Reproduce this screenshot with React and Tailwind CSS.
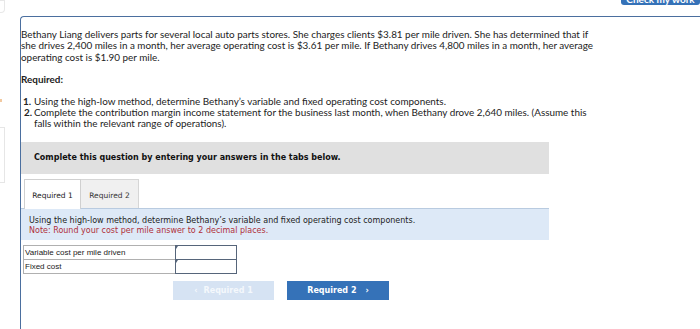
const body = { fontFamily: 'Lato, "Open Sans", sans-serif' }
const verdana = { fontFamily: '"DejaVu Sans", Verdana, sans-serif' }

const rows = ['Variable cost per mile driven', 'Fixed cost']

const App = () => {
    return (
        <div className="w-[700px] h-[329px] overflow-hidden bg-white flex text-[#222]" style={body}>
            <div className="w-[20px] shrink-0 flex flex-col">
                <div className="w-[5px] h-[13px] border border-[#e8e8e8] border-l-0 rounded-br-sm" />
                <div className="w-[2px] h-[3px] bg-[#f2c9a0] mt-[86px]" />
                <div className="w-[5px] h-[56px] border border-[#e6e6e6] border-l-0 mt-[25px]" />
            </div>

            <div className="flex-1 flex flex-col">
                <div className="h-[16px] flex justify-end">
                    <button className="w-[79px] h-[20px] mt-[-15px] pt-[8px] bg-[#3572b8] rounded-[3px] text-white text-[10px] leading-[12px] font-bold">
                        Check my work
                    </button>
                </div>

                <div className="flex-1 border-t border-l border-[#4b6f9f] rounded-tl-[4px] pt-[12px]">
                    <p className="text-[9.9px] leading-[11.4px] whitespace-nowrap">
                        Bethany Liang delivers parts for several local auto parts stores. She charges clients $3.81 per mile driven. She has determined that if<br />
                        she drives 2,400 miles in a month, her average operating cost is $3.61 per mile. If Bethany drives 4,800 miles in a month, her average<br />
                        operating cost is $1.90 per mile.
                    </p>

                    <p className="mt-[10.5px] text-[9.9px] leading-[11.4px] font-bold">Required:</p>

                    <div className="mt-[10.5px] text-[9.9px] leading-[11.4px] grid grid-cols-[13px_1fr] whitespace-nowrap">
                        <span className="font-bold text-right pr-[3px]">1.</span>
                        <span>Using the high-low method, determine Bethany’s variable and fixed operating cost components.</span>
                        <span className="font-bold text-right pr-[2px]">2.</span>
                        <span>
                            Complete the contribution margin income statement for the business last month, when Bethany drove 2,640 miles. (Assume this<br />
                            falls within the relevant range of operations).
                        </span>
                    </div>

                    <div className="mt-[12.5px] w-[528px] h-[32px] bg-[#e0e0e0] flex items-center pl-[13px]">
                        <span className="text-[8px] font-bold text-[#111]" style={verdana}>
                            Complete this question by entering your answers in the tabs below.
                        </span>
                    </div>

                    <div className="mt-[5px] ml-[3px] flex h-[29px] text-[7.5px]" style={verdana}>
                        <div className="w-[57px] bg-white border border-b-0 border-[#d0d0d0] flex items-center justify-center pt-[2px] relative z-10 mb-[-1px]">
                            Required 1
                        </div>
                        <div className="w-[58px] bg-[#f0f0f0] border border-l-0 border-b-0 border-[#d6d6d6] flex items-center justify-center pt-[2px] text-[#333]">
                            Required 2
                        </div>
                    </div>

                    <div className="w-[528px] h-[32px] bg-[#dde9f7] border-t border-[#b9cbe0] pt-[7px] pl-[8px] text-[8px] leading-[9.5px]" style={verdana}>
                        <p className="text-[#222]">Using the high-low method, determine Bethany’s variable and fixed operating cost components.</p>
                        <p className="text-[#b0303a]">Note: Round your cost per mile answer to 2 decimal places.</p>
                    </div>

                    <div className="mt-[5px] ml-[2px] w-[214px]" style={{ fontFamily: '"Liberation Sans", Arial, sans-serif' }}>
                        {rows.map((label, i) => (
                            <div key={label} className={`flex h-[15px] ${i > 0 ? 'mt-[-1px]' : ''}`}>
                                <div className="w-[153px] border border-[#b0b0b0] text-[8px] leading-[13px] pl-[1px] text-[#222]">{label}</div>
                                <div className="w-[62px] ml-[-1px] border-[1.5px] border-[#56657a] relative bg-white">
                                    <div className="absolute left-0 top-0 w-0 h-0 border-t-[3px] border-r-[2px] border-t-[#56657a] border-r-transparent" />
                                </div>
                            </div>
                        ))}
                    </div>

                    <div className="mt-[7px] ml-[152px] flex gap-[13px] text-[8px] font-bold" style={verdana}>
                        <div className="w-[101px] h-[19px] bg-[#d6e3f3] text-[#f4f8fc] flex items-center justify-center gap-[6px]">
                            <span>&lsaquo;</span>
                            <span>Required 1</span>
                        </div>
                        <div className="w-[102px] h-[19px] bg-[#3572b8] text-white flex items-center justify-center gap-[9px]">
                            <span>Required 2</span>
                            <span>&rsaquo;</span>
                        </div>
                    </div>
                </div>
            </div>
        </div>
    )
}

export default App
